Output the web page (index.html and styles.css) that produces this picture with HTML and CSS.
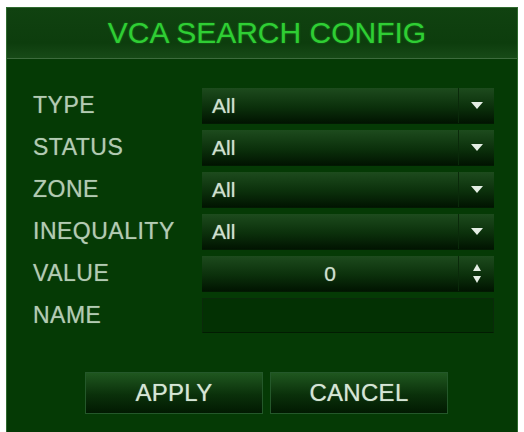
FILE: index.html
```html
<!DOCTYPE html>
<html lang="en">
<head>
  <meta charset="UTF-8" />
  <title>VCA Search Config</title>
  <link rel="stylesheet" href="styles.css">
</head>
<body>
  <div class="dialog">
    <div class="title">VCA SEARCH CONFIG</div>

    <div class="form">
      <div class="row">
        <span class="label">TYPE</span>
        <div class="select"><span class="val">All</span><span class="arrow"><i class="down"></i></span></div>
      </div>
      <div class="row">
        <span class="label">STATUS</span>
        <div class="select"><span class="val">All</span><span class="arrow"><i class="down"></i></span></div>
      </div>
      <div class="row">
        <span class="label">ZONE</span>
        <div class="select"><span class="val">All</span><span class="arrow"><i class="down"></i></span></div>
      </div>
      <div class="row">
        <span class="label">INEQUALITY</span>
        <div class="select"><span class="val">All</span><span class="arrow"><i class="down"></i></span></div>
      </div>
      <div class="row">
        <span class="label">VALUE</span>
        <div class="select"><span class="val num">0</span><span class="arrow spin"><i class="up"></i><i class="down small"></i></span></div>
      </div>
      <div class="row">
        <span class="label">NAME</span>
        <div class="input"></div>
      </div>
    </div>

    <div class="buttons">
      <button class="btn">APPLY</button>
      <button class="btn">CANCEL</button>
    </div>
  </div>
</body>
</html>
```

FILE: styles.css
```css
body {
  margin: 0;
  background-color: #ffffff;
  font-family: 'Liberation Sans', Arial, sans-serif;
}

.dialog {
  margin: 7px 0 0 6px;
  width: 510px;
  height: 424px;
  background-color: #053a05;
  border: 1px solid #2f6a2f;
  border-bottom: none;
}

.title {
  height: 50px;
  line-height: 50px;
  padding-left: 10px;
  text-align: center;
  font-size: 30px;
  color: #2fce34;
  background: linear-gradient(#104210, #0d3d0d 70%, #174a17);
  border-bottom: 1px solid #3d6b3d;
  text-shadow: 0 0 2px #1a8a1a;
}

.form {
  padding: 29px 0 0 26px;
  display: flex;
  flex-direction: column;
  gap: 7px;
}

.row {
  display: flex;
  align-items: center;
  height: 35px;
}

.label {
  width: 169px;
  font-size: 23px;
  letter-spacing: 0.5px;
  color: #b3cbb3;
  text-shadow: 0 0 1px #6a8a6a;
}

.select {
  width: 292px;
  height: 35px;
  display: flex;
  background: linear-gradient(#1d4b1d, #0b300b 55%, #011401);
  border-bottom: 1px solid #021a02;
}

.val {
  flex: 1;
  padding-left: 10px;
  line-height: 35px;
  font-size: 21px;
  color: #cfe0cf;
  text-shadow: 0 0 1px #8aa08a;
}

.val.num {
  padding-left: 0;
  text-align: center;
}

.arrow {
  width: 35px;
  border-left: 1px solid #0a2a0a;
  display: flex;
  flex-direction: column;
  align-items: center;
  justify-content: center;
  gap: 5px;
}

.down {
  width: 0;
  height: 0;
  border-left: 6px solid transparent;
  border-right: 6px solid transparent;
  border-top: 7px solid #e4eee4;
}

.down.small {
  border-left-width: 4px;
  border-right-width: 4px;
}

.up {
  width: 0;
  height: 0;
  border-left: 4px solid transparent;
  border-right: 4px solid transparent;
  border-bottom: 7px solid #e4eee4;
}

.input {
  width: 290px;
  height: 33px;
  background-color: #033103;
  border: 1px solid #0a2a0a;
  border-bottom-color: #021c02;
}

.buttons {
  display: flex;
  gap: 7px;
  padding: 39px 0 0 78px;
}

.btn {
  width: 178px;
  height: 42px;
  font-family: 'Liberation Sans', Arial, sans-serif;
  font-size: 24px;
  letter-spacing: 0.3px;
  color: #d6e6d6;
  background: linear-gradient(#1f571f, #0a300a 55%, #011a01);
  border: 1px solid #24582a;
  text-shadow: 0 0 1px #8aa08a;
  cursor: pointer;
}
```
